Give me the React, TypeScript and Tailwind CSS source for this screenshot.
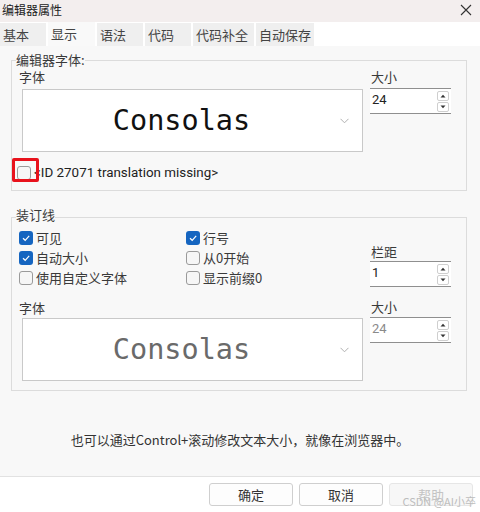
import React from "react";

const cjk = "font-['Noto_Sans_CJK_SC',sans-serif]";

function Check({ checked }: { checked: boolean }) {
  if (checked) {
    return (
      <div className="w-[14px] h-[14px] rounded-[3px] bg-[#1565c0] flex items-center justify-center shrink-0">
        <svg width="10" height="10" viewBox="0 0 10 10">
          <path d="M2 5.2 L4.2 7.3 L8.2 2.8" fill="none" stroke="#ffffff" strokeWidth="1.2" />
        </svg>
      </div>
    );
  }
  return <div className="w-[14px] h-[14px] rounded-[3px] border border-[#9a9a9a] bg-[#f6f6f6] shrink-0" />;
}

function CheckRow({ checked, label }: { checked: boolean; label: string }) {
  return (
    <div className="h-[20px] flex items-center gap-[3px]">
      <Check checked={checked} />
      <span className={`${cjk} text-[13px] leading-[20px] text-[#3a3a3a] whitespace-nowrap`}>{label}</span>
    </div>
  );
}

function Chevron() {
  return (
    <svg width="9" height="6" viewBox="0 0 9 6" className="shrink-0">
      <path d="M0.5 0.8 L4.5 4.8 L8.5 0.8" fill="none" stroke="#b0b0b0" strokeWidth="1" />
    </svg>
  );
}

function Combo({ color }: { color: string }) {
  return (
    <div className="ml-[3px] w-[341px] h-[63px] bg-white border border-[#c9c9c9] flex items-center">
      <div className="flex-1 flex justify-center">
        <span className={`font-['DejaVu_Sans_Mono',monospace] text-[28.5px] leading-[34px] ${color}`}>Consolas</span>
      </div>
      <div className="w-[22px] flex justify-start pt-[1px]">
        <Chevron />
      </div>
    </div>
  );
}

function SpinBtn({ up }: { up: boolean }) {
  return (
    <div className="w-[12px] h-[10px] bg-white border border-[#cfcfcf] rounded-[2px] flex items-center justify-center">
      <svg width="6" height="4" viewBox="0 0 6 4">
        {up ? <path d="M0.5 3.5 L3 0.8 L5.5 3.5 Z" fill="#333" /> : <path d="M0.5 0.5 L3 3.2 L5.5 0.5 Z" fill="#333" />}
      </svg>
    </div>
  );
}

function Spin({ value, disabled }: { value: string; disabled?: boolean }) {
  return (
    <div className="w-[81px] h-[26px] bg-white border-t border-b border-[#8f8f8f] flex justify-between">
      <span
        className={`font-['Roboto',sans-serif] text-[13px] leading-[16px] pt-[3px] pl-[2px] ${
          disabled ? "text-[#8a8a8a]" : "text-[#222]"
        }`}
      >
        {value}
      </span>
      <div className="flex flex-col gap-[1px] pt-[2px] pr-[2px]">
        <SpinBtn up />
        <SpinBtn up={false} />
      </div>
    </div>
  );
}

function Label({ text }: { text: string }) {
  return <div className={`${cjk} text-[13px] leading-[14px] text-[#3a3a3a]`}>{text}</div>;
}

export default function App() {
  const tabs = [
    { t: "基本", w: "w-[46px]" },
    { t: "显示", w: "w-[47px]", sel: true },
    { t: "语法", w: "w-[46px]" },
    { t: "代码", w: "w-[46px]" },
    { t: "代码补全", w: "w-[61px]" },
    { t: "自动保存", w: "w-[58px]" },
  ];
  return (
    <div className="w-[480px] h-[512px] bg-[#f8f8f8] flex flex-col relative overflow-hidden">
      {/* title bar */}
      <div className="h-[22px] bg-[#f3eeee] flex items-center justify-between pl-[2px] pr-[8px]">
        <span className={`${cjk} text-[12px] leading-[16px] text-[#222] -mt-[3px]`}>编辑器属性</span>
        <svg width="12" height="12" viewBox="0 0 12 12" className="-mt-[3px]">
          <path d="M1 1 L11 11 M11 1 L1 11" stroke="#333" strokeWidth="1.1" />
        </svg>
      </div>
      {/* tabs */}
      <div className="h-[24px] bg-white flex items-end gap-[2px]">
        {tabs.map((tb) => (
          <div
            key={tb.t}
            className={`${tb.w} ${tb.sel ? "h-[24px] bg-[#f9f9f9]" : "h-[23px] bg-[#efefef]"} flex items-center pl-[3px] ${cjk} text-[13px] text-[#444] whitespace-nowrap`}
          >
            {tb.t}
          </div>
        ))}
      </div>
      {/* content */}
      <div className="flex-1 flex flex-col pt-[6px] pl-[11px]">
        <fieldset className="w-[456px] border border-[#dcdcdc]">
          <legend className={`ml-[4px] ${cjk} text-[13px] leading-[16px] text-[#3a3a3a]`}>编辑器字体:</legend>
          <div className="flex pt-[2px]">
            <div className="pl-[7px] flex flex-col">
              <Label text="字体" />
              <div className="mt-[5px]">
                <Combo color="text-[#111]" />
              </div>
            </div>
            <div className="ml-[7px] flex flex-col">
              <div className="pl-[1px]">
                <Label text="大小" />
              </div>
              <div className="mt-[4px]">
                <Spin value="24" />
              </div>
            </div>
          </div>
          <div className="relative mt-[12px] h-[18px] flex items-center pl-[5px] gap-[3px] mb-[8px]">
            <Check checked={false} />
            <span className="font-['Roboto',sans-serif] text-[13.4px] leading-[18px] text-[#222]">
              &lt;ID 27071 translation missing&gt;
            </span>
            <div className="absolute left-[0px] top-[-6px] w-[27px] h-[24px] border-[3px] border-[#e8121c] rounded-[2px]" />
          </div>
        </fieldset>

        <fieldset className="mt-[15px] w-[456px] border border-[#dcdcdc]">
          <legend className={`ml-[4px] ${cjk} text-[13px] leading-[18px] pb-[4px] text-[#3a3a3a]`}>装订线</legend>
          <div className="flex">
            <div className="pl-[7px] flex flex-col">
              <div className="grid grid-cols-[167px_120px]">
                <CheckRow checked label="可见" />
                <CheckRow checked label="行号" />
                <CheckRow checked label="自动大小" />
                <CheckRow checked={false} label="从0开始" />
                <CheckRow checked={false} label="使用自定义字体" />
                <CheckRow checked={false} label="显示前缀0" />
              </div>
              <div className="mt-[13px]">
                <Label text="字体" />
              </div>
              <div className="mt-[3px] mb-[9px]">
                <Combo color="text-[#6a6a6a]" />
              </div>
            </div>
            <div className="ml-[7px] flex flex-col pt-[17px]">
              <div className="pl-[1px]">
                <Label text="栏距" />
              </div>
              <div className="mt-[2px]">
                <Spin value="1" />
              </div>
              <div className="mt-[13px] pl-[1px]">
                <Label text="大小" />
              </div>
              <div className="mt-[3px]">
                <Spin value="24" disabled />
              </div>
            </div>
          </div>
        </fieldset>

        <div className="mt-[40px] pr-[11px] flex justify-center">
          <span className={`${cjk} text-[13px] leading-[18px] text-[#333]`}>
            也可以通过Control+滚动修改文本大小，就像在浏览器中。
          </span>
        </div>
      </div>
      {/* footer */}
      <div className="h-[36px] bg-white border-t border-[#e2e2e2] flex justify-end gap-[6px] pt-[6px] pr-[7px]">
        <div className={`w-[84px] h-[23px] bg-[#fdfdfd] border border-[#cfcfcf] rounded-[3px] flex items-center justify-center ${cjk} text-[13px] text-[#333]`}>
          确定
        </div>
        <div className={`w-[84px] h-[23px] bg-[#fdfdfd] border border-[#cfcfcf] rounded-[3px] flex items-center justify-center ${cjk} text-[13px] text-[#333]`}>
          取消
        </div>
        <div className={`w-[84px] h-[23px] bg-[#f7f7f7] border border-[#e6e6e6] rounded-[3px] flex items-center justify-center ${cjk} text-[13px] text-[#c4c4c4]`}>
          帮助
        </div>
      </div>
      <div className={`absolute right-[4px] bottom-[5px] ${cjk} text-[11px] leading-[12px] text-[#bdbdbd]`}>CSDN @AI小卒</div>
    </div>
  );
}
